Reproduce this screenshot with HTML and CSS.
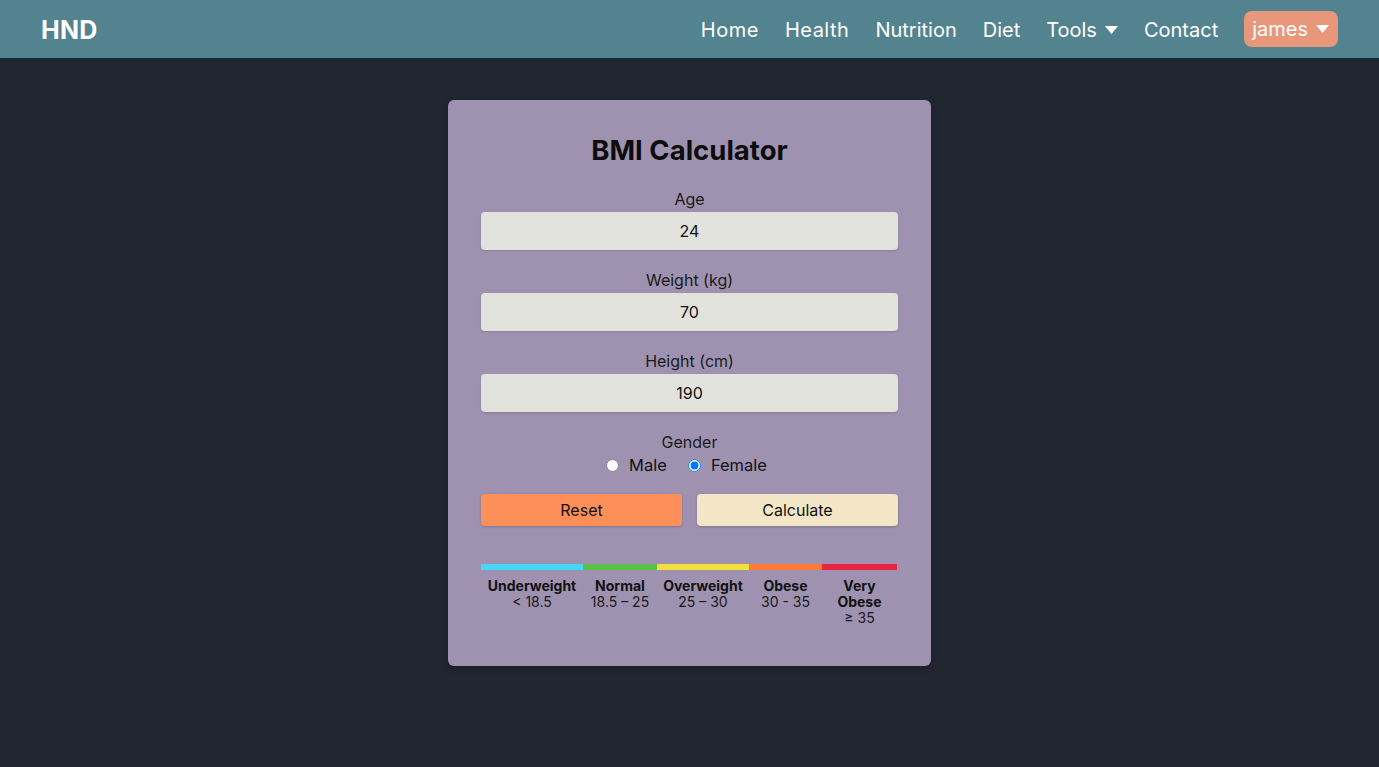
FILE: index.html
```html
<!DOCTYPE html>
<html lang="en">
<head>
<meta charset="utf-8">
<title>BMI Calculator</title>
<link rel="stylesheet" href="styles.css">
</head>
<body>
<header class="navbar">
  <a class="brand" href="#">HND</a>
  <nav class="nav">
    <a href="#">Home</a>
    <a href="#">Health</a>
    <a href="#">Nutrition</a>
    <a href="#">Diet</a>
    <a href="#" class="dropdown">Tools <svg class="caret" width="13" height="8" viewBox="0 0 13 8"><path d="M0 0h13L6.5 8z" fill="#fff"/></svg></a>
    <a href="#">Contact</a>
    <a href="#" class="user dropdown">james <svg class="caret" width="13" height="8" viewBox="0 0 13 8"><path d="M0 0h13L6.5 8z" fill="#fff"/></svg></a>
  </nav>
</header>
<main class="main">
  <section class="card">
    <h1 class="title">BMI Calculator</h1>
    <div class="field">
      <label class="label">Age</label>
      <input class="input" type="text" value="24">
    </div>
    <div class="field">
      <label class="label">Weight (kg)</label>
      <input class="input" type="text" value="70">
    </div>
    <div class="field">
      <label class="label">Height (cm)</label>
      <input class="input" type="text" value="190">
    </div>
    <div class="field gender">
      <span class="label">Gender</span>
      <div class="radios">
        <label class="radio"><input type="radio" name="g"> Male</label>
        <label class="radio"><input type="radio" name="g" checked> Female</label>
      </div>
    </div>
    <div class="buttons">
      <button class="btn reset">Reset</button>
      <button class="btn calc">Calculate</button>
    </div>
    <div class="scale">
      <div class="seg s1"><span class="bar"></span><b>Underweight</b><span>&lt; 18.5</span></div>
      <div class="seg s2"><span class="bar"></span><b>Normal</b><span>18.5 – 25</span></div>
      <div class="seg s3"><span class="bar"></span><b>Overweight</b><span>25 – 30</span></div>
      <div class="seg s4"><span class="bar"></span><b>Obese</b><span>30 - 35</span></div>
      <div class="seg s5"><span class="bar"></span><b>Very Obese</b><span>≥ 35</span></div>
    </div>
  </section>
</main>
</body>
</html>
```
FILE: styles.css
```css
* { box-sizing: border-box; }
html, body { margin: 0; padding: 0; }
body {
  background: #212731;
  font-family: Inter, "Noto Sans", sans-serif;
  color: #111;
  min-height: 767px;
}
.navbar {
  height: 58px;
  background: #53838f;
  display: flex;
  align-items: center;
  justify-content: space-between;
  padding: 0 41px;
}
.brand {
  color: #fff;
  text-decoration: none;
  font-weight: 700;
  font-size: 25px;
  letter-spacing: 0.2px;
  padding-top: 1px;
}
.nav { display: flex; align-items: center; gap: 26px; padding-top: 1px; }
.nav a {
  color: #fff;
  text-decoration: none;
  font-size: 20px;
  display: flex;
  align-items: center;
  gap: 8px;
}
.nav a:first-child, .nav a:nth-child(2) { letter-spacing: 0.5px; }
.nav .user {
  background: #e9977a;
  border-radius: 8px;
  height: 36px;
  padding: 0 9px 0 8px;
  margin-top: -1px;
}
.caret { display: block; }
.main { display: flex; justify-content: center; padding-top: 42px; }
.card {
  width: 483px;
  height: 566px;
  background: #9e92b0;
  border-radius: 6px;
  padding: 33px 33px 40px;
  box-shadow: 0 2px 6px rgba(0,0,0,0.25);
}
.title {
  margin: 0 0 22px;
  text-align: center;
  font-size: 27.5px;
  line-height: 34px;
  font-weight: 700;
  color: #0c0c0c;
}
.field { display: flex; flex-direction: column; align-items: center; margin-bottom: 20px; }
.label { font-size: 16px; line-height: 20px; margin-bottom: 3px; color: #1a1a1a; }
.input {
  width: 100%;
  height: 38px;
  border: none;
  border-radius: 4px;
  background: #e2e2dd;
  text-align: center;
  font-family: inherit;
  font-size: 16px;
  color: #111;
  box-shadow: 0 1px 2px rgba(0,0,0,0.15);
}
.gender { margin-bottom: 19px; }
.gender .label { margin-bottom: 3px; }
.radios { display: flex; gap: 21px; height: 20px; align-items: center; margin-left: -6px; }
.radio { display: flex; align-items: center; gap: 10px; font-size: 16.5px; }
.radio input { margin: 0; width: 13px; height: 13px; }
.buttons { display: flex; gap: 15px; }
.btn {
  flex: 1;
  height: 32px;
  border: none;
  border-radius: 4px;
  font-family: inherit;
  font-size: 16px;
  color: #111;
  box-shadow: 0 1px 3px rgba(0,0,0,0.2);
}
.reset { background: #fe8f59; }
.calc { background: #f3e6c6; }
.scale { display: flex; margin-top: 38px; }
.seg {
  display: flex;
  flex-direction: column;
  align-items: center;
  text-align: center;
  font-size: 14px;
  line-height: 16px;
  color: #1a1a1a;
}
.seg .bar { width: 100%; height: 6px; margin-bottom: 8px; }
.seg b { font-weight: 700; color: #111; }
.s1 { width: 102px; } .s1 .bar { background: #46d6f9; }
.s2 { width: 74px; }  .s2 .bar { background: #5cbf49; }
.s3 { width: 92px; }  .s3 .bar { background: #f3df3b; }
.s4 { width: 73px; }  .s4 .bar { background: #fe7935; }
.s5 { width: 75px; padding: 0 12px; } .s5 .bar { background: #ea2440; margin: 0 -12px 8px; width: auto; align-self: stretch; }
```
